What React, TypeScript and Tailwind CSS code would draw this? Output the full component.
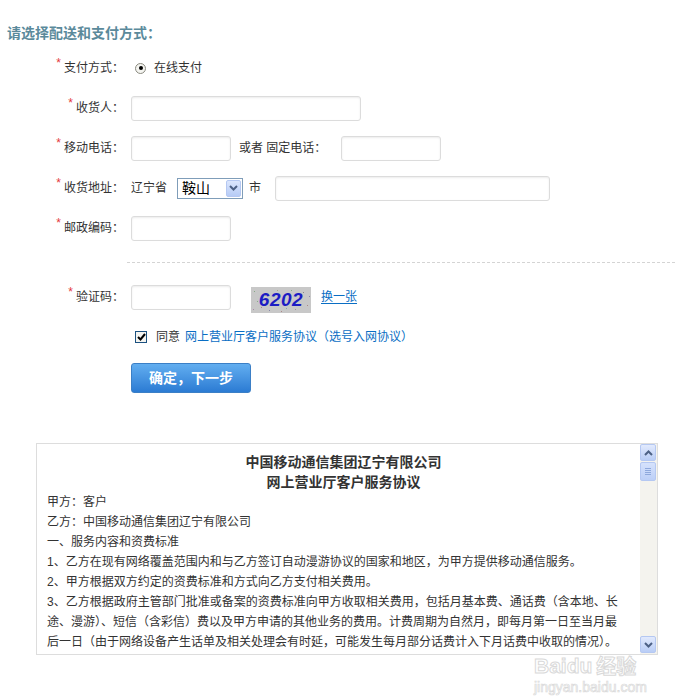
import React from "react";

const FONT = '"Liberation Sans", "Noto Sans CJK SC", sans-serif';

function Star() {
  return <span className="text-[#e4393c] text-[12px] leading-none self-start mt-[9px] mr-[3px]">*</span>;
}

function Label({ text }: { text: string }) {
  return (
    <div className="w-[124px] h-full flex justify-end items-center shrink-0">
      <Star />
      <span className="text-[12px] text-[#333]">{text}</span>
    </div>
  );
}

function Input({ w }: { w: string }) {
  return <div className={`${w} h-[25px] border border-[#dcdcdc] rounded-[3px] bg-white shadow-[inset_0_1px_2px_rgba(0,0,0,0.08)] shrink-0`} />;
}

const dots = [
  [3, 4, "#8a8"], [10, 20, "#a88"], [18, 23, "#88a"], [26, 3, "#aa8"], [35, 21, "#8aa"], [44, 22, "#a8a"],
  [52, 5, "#888"], [56, 18, "#a88"], [6, 14, "#8a8"], [48, 12, "#88a"], [14, 8, "#999"], [30, 24, "#a88"],
  [40, 3, "#8a8"], [22, 15, "#aaa"], [58, 9, "#88a"], [2, 22, "#a8a"],
];

export default function App() {
  const lines = [
    "甲方：客户",
    "乙方：中国移动通信集团辽宁有限公司",
    "一、服务内容和资费标准",
    "1、乙方在现有网络覆盖范围内和与乙方签订自动漫游协议的国家和地区，为甲方提供移动通信服务。",
    "2、甲方根据双方约定的资费标准和方式向乙方支付相关费用。",
    "3、乙方根据政府主管部门批准或备案的资费标准向甲方收取相关费用，包括月基本费、通话费（含本地、长",
    "途、漫游）、短信（含彩信）费以及甲方申请的其他业务的费用。计费周期为自然月，即每月第一日至当月最",
    "后一日（由于网络设备产生话单及相关处理会有时延，可能发生每月部分话费计入下月话费中收取的情况）。",
  ];
  return (
    <div className="w-[695px] h-[696px] bg-white relative overflow-hidden" style={{ fontFamily: FONT }}>
      <div className="pl-[7px] pt-[25px] text-[14px] leading-[16px] font-bold text-[#5b8a9b]">请选择配送和支付方式：</div>

      <div className="mt-[7px]">
        {/* Row 1 */}
        <div className="h-[40px] flex items-center">
          <Label text="支付方式：" />
          <div className="ml-[11px] w-[11px] h-[11px] rounded-full border border-[#8a8a80] bg-[#f4f4f0] flex items-center justify-center">
            <div className="w-[4px] h-[4px] rounded-full bg-black" />
          </div>
          <span className="ml-[8px] text-[12px] text-[#333]">在线支付</span>
        </div>
        {/* Row 2 */}
        <div className="h-[40px] flex items-center">
          <Label text="收货人：" />
          <div className="ml-[7px]"><Input w="w-[230px]" /></div>
        </div>
        {/* Row 3 */}
        <div className="h-[40px] flex items-center">
          <Label text="移动电话：" />
          <div className="ml-[7px]"><Input w="w-[100px]" /></div>
          <span className="ml-[8px] text-[12px] text-[#333] whitespace-pre">或者 固定电话：</span>
          <div className="ml-[15px]"><Input w="w-[100px]" /></div>
        </div>
        {/* Row 4 */}
        <div className="h-[40px] flex items-center">
          <Label text="收货地址：" />
          <span className="ml-[7px] text-[12px] text-[#333]">辽宁省</span>
          <div className="ml-[10px] w-[66px] h-[21px] border border-[#7f9db9] bg-white flex items-center justify-between">
            <span className="pl-[4px] text-[14px] leading-none text-black">鞍山</span>
            <div className="w-[15px] h-[17px] mr-[1px] rounded-[2px] border border-[#b5c8f2] bg-gradient-to-b from-[#dbe6fd] to-[#b6cbf6] flex items-center justify-center">
              <svg width="9" height="6" viewBox="0 0 9 6"><path d="M1 1 L4.5 4.5 L8 1" fill="none" stroke="#4d6185" strokeWidth="2" /></svg>
            </div>
          </div>
          <span className="ml-[6px] text-[12px] text-[#333]">市</span>
          <div className="ml-[14px]"><Input w="w-[275px]" /></div>
        </div>
        {/* Row 5 */}
        <div className="h-[40px] flex items-center">
          <Label text="邮政编码：" />
          <div className="ml-[7px]"><Input w="w-[100px]" /></div>
        </div>
      </div>

      <div className="mt-[14px] ml-[127px] w-[548px] border-t border-dashed border-[#d4d4d4]" />

      {/* Captcha row */}
      <div className="mt-[14px] h-[40px] flex items-center">
        <Label text="验证码：" />
        <div className="ml-[7px]"><Input w="w-[100px]" /></div>
        <div className="ml-[20px] mt-[5px] w-[60px] h-[26px] bg-[#c8c8c8] relative flex items-center justify-center overflow-hidden">
          <svg className="absolute inset-0" width="60" height="26">
            {dots.map((d, i) => (
              <rect key={i} x={d[0] as number} y={d[1] as number} width="1" height="1" fill={d[2] as string} />
            ))}
          </svg>
          <span className="relative italic font-bold text-[19px] leading-none text-[#1c1cc4] tracking-[0.5px]" style={{ fontFamily: '"Liberation Sans", sans-serif' }}>6202</span>
        </div>
        <span className="ml-[10px] text-[12px] text-[#0a6ec4] underline underline-offset-2">换一张</span>
      </div>

      {/* Agree row */}
      <div className="h-[40px] flex items-center pl-[135px]">
        <div className="w-[12px] h-[12px] border border-[#1c5180] bg-[#f4f4f0] flex items-center justify-center">
          <svg width="9" height="8" viewBox="0 0 9 8"><path d="M1 4 L3.5 6.5 L8 1" fill="none" stroke="#000" strokeWidth="2" /></svg>
        </div>
        <span className="ml-[9px] text-[12px] text-[#333]">同意</span>
        <span className="ml-[5px] text-[12px] text-[#0a6ec4]">网上营业厅客户服务协议（选号入网协议）</span>
      </div>

      <div className="mt-[6px] ml-[131px] w-[120px] h-[30px] rounded-[3px] border border-[#3b7fc6] bg-gradient-to-b from-[#62aef0] to-[#2b7bd3] flex items-center justify-center">
        <span className="text-white font-bold text-[14px]">确定，下一步</span>
      </div>

      {/* Agreement box */}
      <div className="mt-[50px] ml-[36px] w-[622px] h-[212px] border border-[#dddddd] flex overflow-hidden">
        <div className="flex-1 pl-[10px] pt-[8px] text-[12px] leading-[20px] text-[#333] overflow-hidden">
          <div className="text-center font-bold text-[14px]">中国移动通信集团辽宁有限公司</div>
          <div className="text-center font-bold text-[14px]">网上营业厅客户服务协议</div>
          {lines.map((l, i) => (
            <div key={i} className="whitespace-nowrap">{l}</div>
          ))}
        </div>
        <div className="w-[17px] h-full bg-[#f4f3ee] flex flex-col justify-between">
          <div>
            <div className="w-[16px] h-[17px] rounded-[2px] border border-[#b5c8f2] bg-gradient-to-b from-[#e2eafd] to-[#b9cdf6] flex items-center justify-center">
              <svg width="9" height="6" viewBox="0 0 9 6"><path d="M1 5 L4.5 1.5 L8 5" fill="none" stroke="#4d6185" strokeWidth="2" /></svg>
            </div>
            <div className="mt-[1px] w-[16px] h-[19px] rounded-[2px] border border-[#b5c8f2] bg-gradient-to-b from-[#d6e2fc] to-[#bccff7] flex flex-col items-center justify-center gap-[1px]">
              <div className="w-[6px] h-[1px] bg-[#8ea8dc]" />
              <div className="w-[6px] h-[1px] bg-[#8ea8dc]" />
              <div className="w-[6px] h-[1px] bg-[#8ea8dc]" />
              <div className="w-[6px] h-[1px] bg-[#8ea8dc]" />
            </div>
          </div>
          <div className="w-[16px] h-[17px] rounded-[2px] border border-[#b5c8f2] bg-gradient-to-b from-[#e2eafd] to-[#b9cdf6] flex items-center justify-center mb-[1px]">
            <svg width="9" height="6" viewBox="0 0 9 6"><path d="M1 1 L4.5 4.5 L8 1" fill="none" stroke="#4d6185" strokeWidth="2" /></svg>
          </div>
        </div>
      </div>

      {/* Watermark */}
      <div className="absolute left-[534px] top-[656px] pointer-events-none select-none">
        <div className="flex items-center h-[20px]">
          <span className="block h-[20px] text-[21px] leading-[20px] font-bold text-white" style={{ WebkitTextStroke: "1px #d9d9d9", fontFamily: '"Liberation Sans", sans-serif' }}>Baidu</span>
          <span className="block h-[20px] ml-[4px] text-[20px] leading-[20px] font-bold text-white" style={{ WebkitTextStroke: "1px #d9d9d9", fontFamily: '"Noto Sans CJK SC", sans-serif' }}>经验</span>
        </div>
        <div className="mt-[4px] h-[14px] text-[14px] text-white leading-[14px]" style={{ WebkitTextStroke: "0.7px #d9d9d9", fontFamily: '"Liberation Sans", sans-serif' }}>jingyan.baidu.com</div>
      </div>
    </div>
  );
}
